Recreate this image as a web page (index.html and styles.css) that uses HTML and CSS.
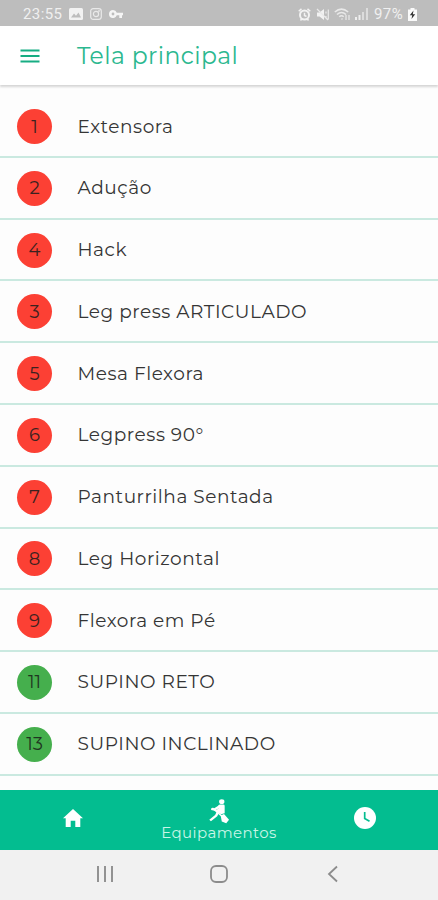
FILE: index.html
```html
<!DOCTYPE html>
<html lang="pt-BR">
<head>
<meta charset="utf-8">
<title>Tela principal</title>
<link rel="stylesheet" href="styles.css">
</head>
<body>
<div class="screen">
  <div class="status">
    <span class="time">23:55</span>
    <svg class="s-image" width="14" height="12" viewBox="0 0 14 12"><rect width="14" height="12" rx="1.5" fill="#f2f2f2"/><path d="M2 9.5l3-4 2 2.200L9.500 4.500 12 9.500z" fill="#bdbdbd"/></svg>
    <svg class="s-insta" width="12" height="12" viewBox="0 0 12 12" fill="none" stroke="#e9e9e9" stroke-width="1.200"><rect x=".7" y=".7" width="10.600" height="10.600" rx="2.500"/><circle cx="6" cy="6" r="2.600"/><circle cx="9" cy="3" r=".3"/></svg>
    <svg class="s-key" width="14" height="8" viewBox="0 0 14 8"><path fill="#f5f5f5" fill-rule="evenodd" d="M4 0a4 4 0 0 1 3.800 2.700H14v2.600h-1V8h-2.700V5.300H7.800A4 4 0 1 1 4 0zm0 2.600a1.400 1.400 0 1 0 0 2.800 1.400 1.400 0 0 0 0-2.800z"/></svg>
    <span class="spacer"></span>
    <svg class="s-alarm" width="13" height="13" viewBox="0 0 13 13"><circle cx="6.500" cy="7" r="4.500" fill="none" stroke="#f2f2f2" stroke-width="2"/><path d="M.7 3.300L3.500.9M12.300 3.300L9.500.9M6.500 4.700v2.800L8.500 8.500M2.500 12.500l1.500-2M10.500 12.500L9 10.500" stroke="#f2f2f2" stroke-width="1.500" fill="none"/></svg>
    <svg class="s-mute" width="14" height="13" viewBox="0 0 14 13"><path d="M1 4.500h2.500L8 1v11L3.500 8.500H1z" fill="#f2f2f2"/><path d="M1 1l11 11M10 3.500v2M10 8v2M12.300 1.500v10" stroke="#e9e9e9" fill="none" stroke-width="1.200"/></svg>
    <svg class="s-wifi" width="17" height="13" viewBox="0 0 17 13" fill="none" stroke="#e9e9e9" stroke-width="1.500"><path d="M.8 4Q7.500-1.800 14.200 4M3 6.500q4.500-4 9 0M5.300 8.800q2.200-2 4.400 0"/><path d="M7.500 11.500l1-1M12 7v5M15 12V7" stroke-width="1.200"/></svg>
    <svg class="s-signal" width="14" height="12" viewBox="0 0 14 12"><path d="M0 9h2v3H0zM3.500 7h2v5h-2z" fill="#eee"/><path d="M7 4h2v8H7zM11 0h2v12h-2z" fill="#dcdcdc"/></svg>
    <span class="pct">97%</span>
    <svg class="s-batt" width="9" height="13" viewBox="0 0 9 13"><path d="M2.500 0h4v1.500H9V13H0V1.500h2.500z" fill="#fafafa"/><path d="M5.500 2.500L1.800 7.300h2.400L3.500 11l3.700-4.800H4.800z" fill="#333"/></svg>
  </div>
  <header class="appbar">
    <svg class="menu" width="20" height="14" viewBox="0 0 20 14"><path d="M.5 1.500h19M.5 7h19M.5 12.500h19" stroke="#17ad83" stroke-width="2"/></svg>
    <h1>Tela principal</h1>
  </header>
  <main class="list">
    <div class="row"><span class="badge">1</span><span class="name">Extensora</span></div>
    <div class="row"><span class="badge">2</span><span class="name">Adução</span></div>
    <div class="row"><span class="badge">4</span><span class="name">Hack</span></div>
    <div class="row"><span class="badge">3</span><span class="name">Leg press ARTICULADO</span></div>
    <div class="row"><span class="badge">5</span><span class="name">Mesa Flexora</span></div>
    <div class="row"><span class="badge">6</span><span class="name">Legpress 90°</span></div>
    <div class="row"><span class="badge">7</span><span class="name">Panturrilha Sentada</span></div>
    <div class="row"><span class="badge">8</span><span class="name">Leg Horizontal</span></div>
    <div class="row"><span class="badge">9</span><span class="name">Flexora em Pé</span></div>
    <div class="row"><span class="badge free">11</span><span class="name">SUPINO RETO</span></div>
    <div class="row"><span class="badge free">13</span><span class="name">SUPINO INCLINADO</span></div>
  </main>
  <nav class="tabs">
    <div class="tab"><svg width="20" height="18" viewBox="0 0 20 18"><path d="M10 0L0 9.300h2.700V18h5v-6.200h4.600V18h5V9.300H20z" fill="#fff"/></svg></div>
    <div class="tab active">
      <svg width="20" height="25" viewBox="0 0 18 25" preserveAspectRatio="none"><circle cx="11.500" cy="2.700" r="2.400" fill="#fff"/><path d="M8.500 6.300q.5-.8 1.500-.8h2.800q1.300 0 1.300 1.300v7.400l-3.300 1-5-3.800 2.700-1.900z" fill="#fff"/><path d="M10 7L5 10.500 2 10M12.500 10.500L8 13M8.500 12L6.500 16.500 1 21.500" fill="none" stroke="#fff" stroke-width="2.200"/><path d="M3 9l9.500 9" stroke="#fff" stroke-width="1.500"/><path d="M10.500 16.500l3-1.500 4.500 5.800-2.500 3.400-4-1.800z" fill="#fff"/></svg>
      <span>Equipamentos</span>
    </div>
    <div class="tab"><svg width="22" height="22" viewBox="0 0 22 22"><circle cx="11" cy="11" r="11" fill="#fff"/><path d="M10.700 5v6.500l4.800 2.800" fill="none" stroke="#05bd90" stroke-width="1.700"/></svg></div>
  </nav>
  <footer class="sysnav">
    <svg width="18" height="18" viewBox="0 0 18 18"><path d="M2 1v16M9 1v16M16 1v16" stroke="#929292" stroke-width="2"/></svg>
    <svg width="18" height="18" viewBox="0 0 18 18"><rect x="1" y="1" width="16" height="16" rx="5" fill="none" stroke="#8c8c8c" stroke-width="1.800"/></svg>
    <svg width="18" height="18" viewBox="0 0 18 18"><path d="M13 1.500L5 9l8 7.500" fill="none" stroke="#8c8c8c" stroke-width="1.800"/></svg>
  </footer>
</div>
</body>
</html>
```
FILE: styles.css
```css
* { box-sizing: border-box; }
body { margin: 0; font-family: Montserrat, Inter, "Liberation Sans", sans-serif; }
.screen { width: 438px; height: 900px; display: flex; flex-direction: column; background: #fdfdfd; overflow: hidden; }
svg { display: block; flex: none; }
.status { height: 26px; flex: none; display: flex; align-items: center; padding: 2px 21px 0 23px; background: #bdbdbd; color: #f0f0f0; font: 15px/24px Roboto, sans-serif; }
.time { width: 46px; letter-spacing: .4px; }
.s-insta { margin-left: 7px; }
.s-key { margin-left: 7px; }
.spacer { flex: 1; }
.s-mute { margin-left: 5px; }
.s-wifi { margin-left: 4px; }
.s-signal { margin-left: 4px; }
.pct { margin-left: 5px; width: 34px; letter-spacing: .4px; }
.appbar { height: 59px; flex: none; display: flex; align-items: center; padding: 1px 20px 0; background: #fff; box-shadow: 0 2px 2px #d6d6d6; z-index: 1; }
.appbar h1 { margin: 0 0 0 37px; font-size: 23.500px; line-height: 30px; font-weight: 400; letter-spacing: .4px; color: #2bb88f; }
.list { flex: none; height: 705px; padding-top: 11.200px; overflow: hidden; }
.row { height: 61.770px; display: flex; align-items: center; padding: 1px 18px 0 17px; border-bottom: 2px solid #cae9e0; }
.badge { width: 35px; height: 35px; flex: none; border-radius: 50%; background: #fc4034; color: #3b2220; display: flex; align-items: center; justify-content: center; font-size: 18px; }
.badge.free { background: #45af4d; color: #1f3521; }
.name { margin-left: 25.500px; font-size: 18.500px; line-height: 24px; font-weight: 400; letter-spacing: .55px; color: #353535; white-space: nowrap; }
.tabs { height: 60px; flex: none; display: grid; grid-template-columns: repeat(3, 1fr); background: #03bd90; color: #c8f5e7; }
.tab { display: flex; flex-direction: column; align-items: center; justify-content: center; padding: 0 0 4px; }
.tab.active { font-size: 15px; line-height: 18px; letter-spacing: .4px; padding: 0; }
.sysnav { flex: none; height: 50px; display: grid; grid-template-columns: repeat(3, 114px); justify-content: center; justify-items: center; align-items: center; background: #f1f1f1; padding-bottom: 2px; }
```
